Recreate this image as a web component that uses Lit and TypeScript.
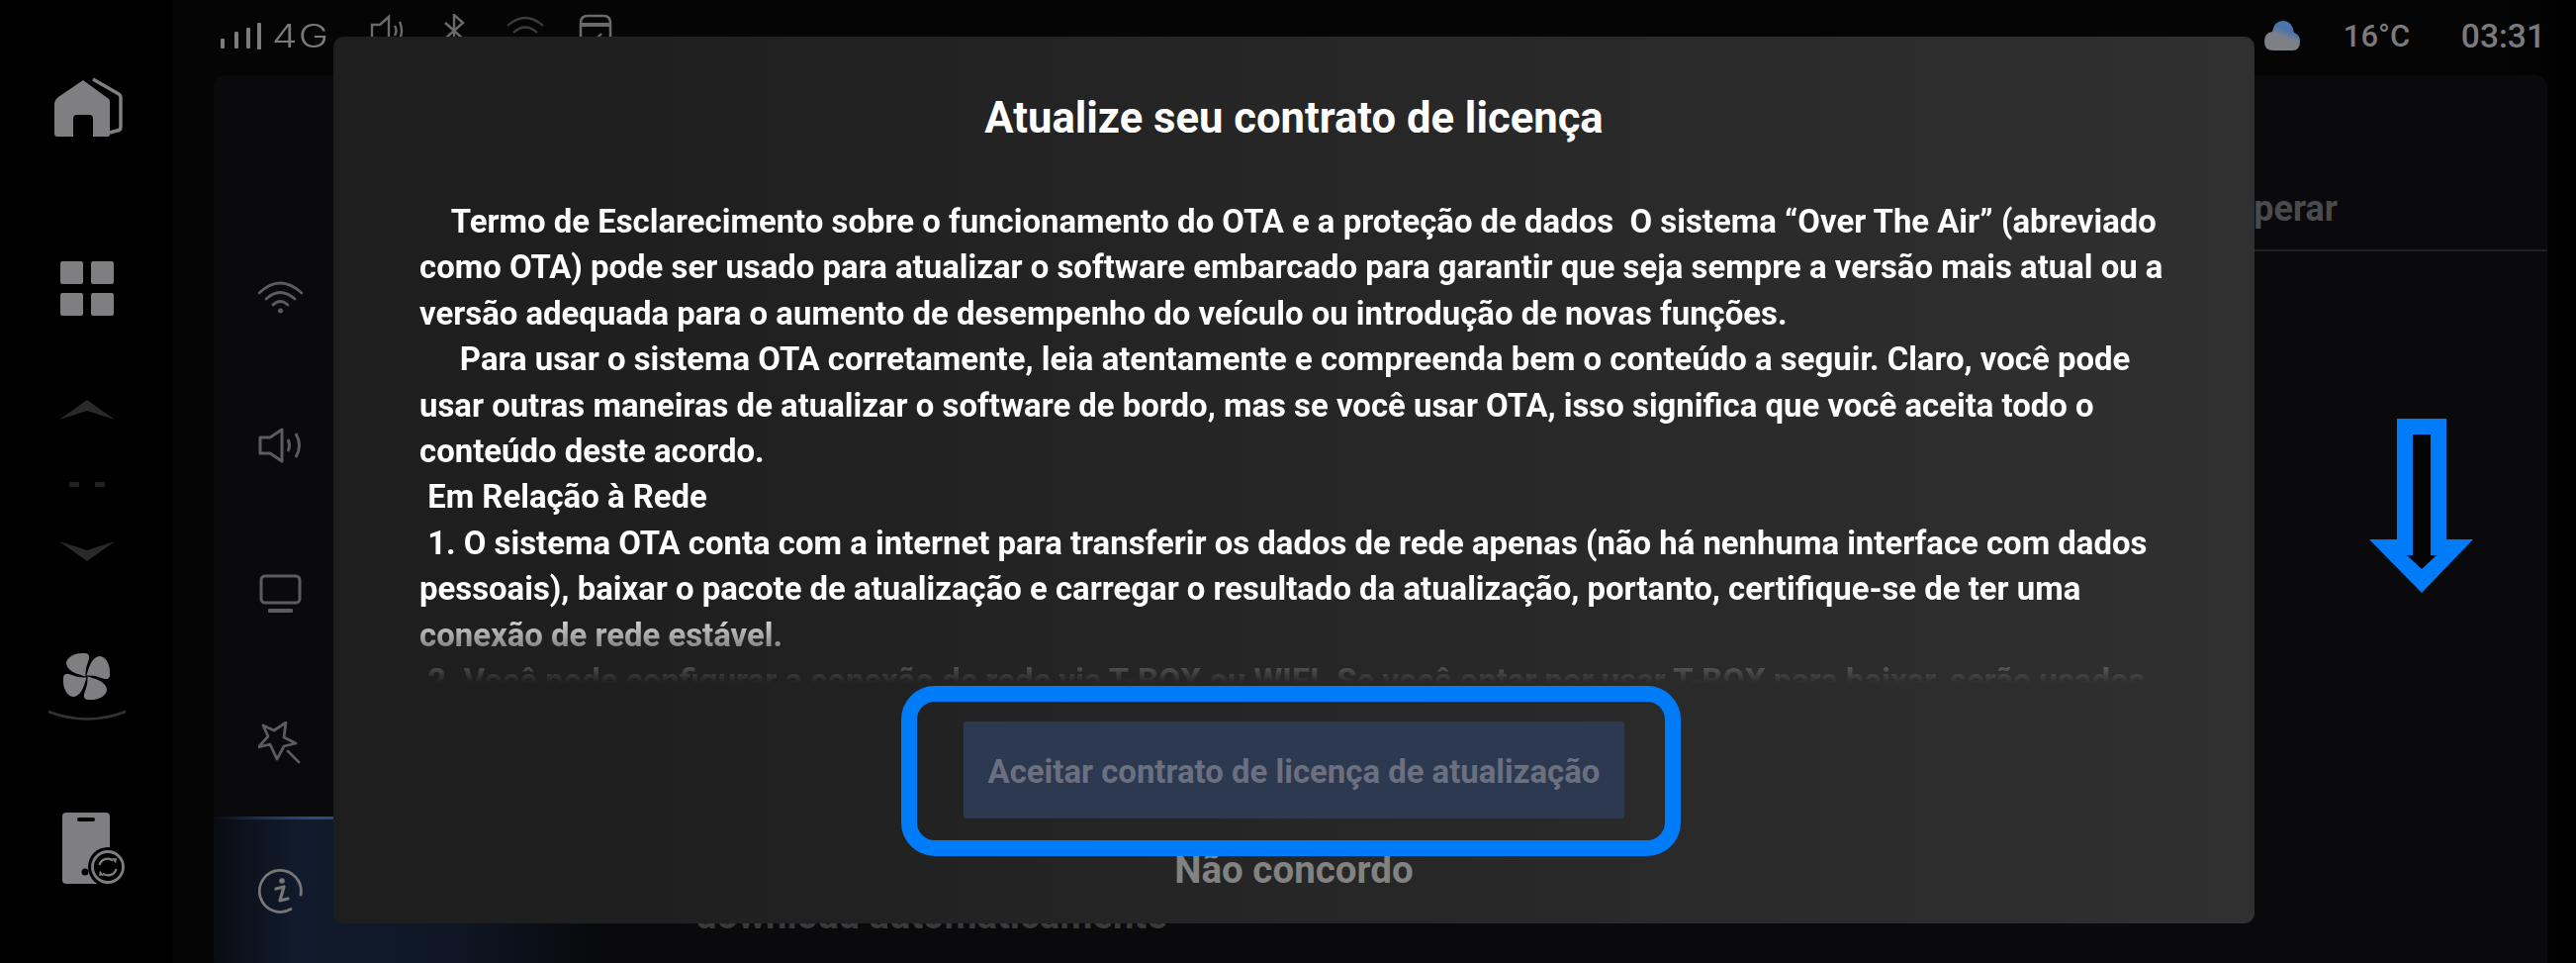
import { LitElement, html, css, svg } from "lit";
import { customElement } from "lit/decorators.js";

const LINES = [
  "    Termo de Esclarecimento sobre o funcionamento do OTA e a proteção de dados  O sistema “Over The Air” (abreviado",
  "como OTA) pode ser usado para atualizar o software embarcado para garantir que seja sempre a versão mais atual ou a",
  "versão adequada para o aumento de desempenho do veículo ou introdução de novas funções.",
  "     Para usar o sistema OTA corretamente, leia atentamente e compreenda bem o conteúdo a seguir. Claro, você pode",
  "usar outras maneiras de atualizar o software de bordo, mas se você usar OTA, isso significa que você aceita todo o",
  "conteúdo deste acordo.",
  " Em Relação à Rede",
  " 1. O sistema OTA conta com a internet para transferir os dados de rede apenas (não há nenhuma interface com dados",
  "pessoais), baixar o pacote de atualização e carregar o resultado da atualização, portanto, certifique-se de ter uma",
  "conexão de rede estável.",
  " 2. Você pode configurar a conexão de rede via T-BOX ou WIFI. Se você optar por usar T-BOX para baixar, serão usados",
];

const G = "#7f7f81";

const home = svg`<svg class="i-home" viewBox="0 0 70 62"><path fill="${G}" d="M29 3 L55 22 Q56 23 56 26 L56 58 Q56 60 54 60 L39 60 L39 42 Q39 38 35 38 L23 38 Q19 38 19 42 L19 60 L3 60 Q0 60 0 57 L0 28 Q0 23 4 20 Z"/><path fill="none" stroke="${G}" stroke-width="3.5" stroke-linejoin="round" d="M39 2 L65 17 Q67 18 67 21 L67 50 Q67 54 63 54 L56 56"/></svg>`;
const grid = svg`<svg class="i-grid" viewBox="0 0 54 55"><g fill="${G}"><rect width="23" height="23" rx="2"/><rect x="31" width="23" height="23" rx="2"/><rect y="32" width="23" height="23" rx="2"/><rect x="31" y="32" width="23" height="23" rx="2"/></g></svg>`;
const up = svg`<svg class="i-chev" viewBox="0 0 56 21"><path fill="#29292a" d="M28 0 L56 20 L28 11 L0 20 Z"/></svg>`;
const down = svg`<svg class="i-chev" viewBox="0 0 56 21"><path fill="#29292a" d="M28 21 L56 1 L28 10 L0 1 Z"/></svg>`;
const dash = svg`<svg class="i-dash" viewBox="0 0 36 5"><rect width="10" height="5" fill="#202021"/><rect x="26" width="10" height="5" fill="#202021"/></svg>`;
const blade = "M23 24 C17 22 6 20 4 12 C3 5 13 0 22 1 C28 1 27 6 25 11 C23 16 23 20 23 24 Z";
const fan = svg`<svg class="i-fan" viewBox="0 0 48 48"><g fill="${G}"><path d="${blade}"/><path d="${blade}" transform="rotate(90 24 24)"/><path d="${blade}" transform="rotate(180 24 24)"/><path d="${blade}" transform="rotate(270 24 24)"/></g></svg>`;
const arc = svg`<svg class="i-arc" viewBox="0 0 80 12"><path fill="none" stroke="#333334" stroke-width="2.5" d="M1 2 Q40 17 79 2"/></svg>`;
const phone = svg`<svg class="i-phone" viewBox="0 0 64 72"><rect x="0" y="0" width="48" height="72" rx="4" fill="${G}"/><rect x="15" y="5" width="18" height="4" rx="2" fill="#000"/><circle cx="46" cy="55" r="20" fill="#000"/><circle cx="23" cy="60" r="3.5" fill="#000"/><circle cx="46" cy="55" r="15.5" fill="none" stroke="${G}" stroke-width="2.8"/><path fill="none" stroke="${G}" stroke-width="2.2" d="M37.5 53 A8.5 8.5 0 0 1 51 48.5 M54.5 57 A8.5 8.5 0 0 1 41 61.5"/><path fill="${G}" d="M50 46 L55 46.5 L54 51.5 Z M42 64 L37 63.5 L38 58.5 Z"/></svg>`;

const sig = svg`<svg class="i-sig" viewBox="0 0 42 27"><g fill="#7c7c7e"><rect x="0" y="16" width="4" height="10" rx="1"/><rect x="14" y="9" width="4" height="17" rx="1"/><rect x="26" y="5" width="4" height="21" rx="1"/><rect x="37" y="0" width="4" height="27" rx="1"/></g></svg>`;
const spk = svg`<svg class="i-spk" viewBox="0 0 34 34"><path fill="none" stroke="#6a6a6c" stroke-width="2.4" d="M2 11 H10 L19 3 V31 L10 25 H2 Z M25 12 Q28 17 25 22 M30 8 Q34 17 30 26"/></svg>`;
const bt = svg`<svg class="i-bt" viewBox="0 0 22 34"><path fill="none" stroke="#6a6a6c" stroke-width="2.4" d="M2 9 L20 25 L11 33 V1 L20 9 L2 25"/></svg>`;
const wifiTop = svg`<svg class="i-wt" viewBox="0 0 38 34"><path fill="none" stroke="#3c3c3d" stroke-width="2.2" d="M1 12 Q19 -4 37 12 M7 19 Q19 8 31 19"/></svg>`;
const cal = svg`<svg class="i-cal" viewBox="0 0 34 34"><path fill="none" stroke="#6a6a6c" stroke-width="2.6" d="M2 30 V9 Q2 2 9 2 H25 Q32 2 32 9 V30"/><path fill="#6a6a6c" d="M2 9 H32 V13 H2 Z"/><path fill="none" stroke="#6a6a6c" stroke-width="2.4" d="M11 24 L15 28 L23 20"/></svg>`;

const cloud = svg`<svg class="i-cloud" viewBox="0 0 36 30"><defs><linearGradient id="cg" x1="0.3" y1="1" x2="0.75" y2="0"><stop offset="0.45" stop-color="#7d8186"/><stop offset="0.7" stop-color="#4a74ac"/></linearGradient></defs><path fill="url(#cg)" d="M9 30 Q0 30 0 21 Q0 12 8 11 Q10 0 19 0 Q28 0 30 12 Q36 14 36 21 Q36 30 28 30 Z"/></svg>`;

const S = "#5c5c5e";
const wifi = svg`<svg class="n" viewBox="0 0 45 34"><g fill="none" stroke="${S}" stroke-width="2.8" stroke-linecap="round"><path d="M1 13 Q22 -7 44 13"/><path d="M8 19 Q22 6 37 19"/><path d="M15 25 Q22 18 30 25"/></g><circle cx="22.5" cy="31" r="2.5" fill="${S}"/></svg>`;
const vol = svg`<svg class="n" viewBox="0 0 45 36"><path fill="none" stroke="${S}" stroke-width="3" stroke-linejoin="round" d="M2 10 H12 L24 2 V34 L12 26 H2 Z"/><path fill="none" stroke="${S}" stroke-width="3" d="M30 12 Q33 18 30 24 M38 6 Q45 18 38 30"/></svg>`;
const mon = svg`<svg class="n" viewBox="0 0 45 40"><rect x="3" y="2" width="39" height="27" rx="4" fill="none" stroke="${S}" stroke-width="3"/><rect x="10" y="35" width="25" height="4" rx="1" fill="${S}"/></svg>`;
const wand = svg`<svg class="n" viewBox="0 0 45 43"><path fill="none" stroke="${S}" stroke-width="2.8" stroke-linejoin="round" d="M5 4 L16 9 L28 1 L26 16 L38 22 L26 25 L19 38 L12 23 L0 26 L10 15 Z"/><path stroke="${S}" stroke-width="2.6" stroke-linecap="round" d="M30 30 L41 41"/></svg>`;
const info = svg`<svg class="n" viewBox="0 0 45 46"><path fill="none" stroke="#767678" stroke-width="2.8" stroke-linecap="round" d="M43 27 A21 21 0 1 0 33 41.5"/><circle cx="24" cy="13" r="2.8" fill="#767678"/><path fill="none" stroke="#767678" stroke-width="3.2" stroke-linecap="round" stroke-linejoin="round" d="M18 21 L26 19 L22 33 L30 31"/></svg>`;

const NAV = [wifi, vol, mon, wand, info];

@customElement("app-root")
export class AppRoot extends LitElement {
  static styles = css`
    :host {
      display: block;
      position: relative;
      width: 2604px;
      height: 973px;
      overflow: hidden;
      background: #000;
      font-family: Roboto, "Liberation Sans", sans-serif;
    }
    svg { display: block; }
    .screen { display: flex; height: 973px; }
    .side {
      width: 175px;
      flex: none;
      display: flex;
      flex-direction: column;
      align-items: center;
      background: #000;
      padding-top: 78px;
      box-sizing: border-box;
    }
    .i-home { width: 70px; height: 62px; margin-left: 5px; }
    .i-grid { width: 54px; height: 55px; margin-top: 124px; }
    .i-chev { width: 56px; height: 21px; }
    .side .i-chev.a { margin-top: 85px; }
    .i-dash { width: 36px; height: 5px; margin-top: 62px; }
    .side .i-chev.b { margin-top: 54px; }
    .i-fan { width: 49px; height: 49px; margin-top: 92px; }
    .i-arc { width: 80px; height: 12px; margin-top: 9px; }
    .i-phone { width: 64px; height: 72px; margin-top: 92px; margin-left: 14px; }
    .main {
      flex: 1;
      display: flex;
      flex-direction: column;
      background: linear-gradient(90deg, #050505 0, #050505 97%, #000 100%);
      min-width: 0;
    }
    .status {
      height: 76px;
      flex: none;
      display: flex;
      align-items: center;
      padding: 0 31px 4px 48px;
      box-sizing: border-box;
      color: #7b7b7d;
    }
    .i-sig { width: 42px; height: 27px; }
    .g4 {
      font-family: Inter, Roboto, sans-serif;
      font-size: 32px;
      font-weight: 300;
      letter-spacing: 1px;
      color: #7a7a7c;
      margin-left: 10px;
      width: 57px;
      display: block;
      transform: scaleX(1.27);
      transform-origin: left center;
    }
    .i-spk { width: 34px; height: 34px; margin-left: 42px; margin-top: -10px; }
    .i-bt { width: 22px; height: 34px; margin-left: 40px; margin-top: -10px; }
    .i-wt { width: 38px; height: 34px; margin-left: 42px; margin-top: -10px; }
    .i-cal { width: 34px; height: 34px; margin-left: 35px; margin-top: -10px; }
    .spacer { flex: 1; }
    .i-cloud { width: 36px; height: 30px; margin-right: 44px; }
    .temp { font-size: 31px; font-weight: 500; width: 119px; }
    .time { font-size: 33.6px; font-weight: 500; }
    .panel {
      flex: 1;
      display: flex;
      margin: 0 29px 0 41px;
      background: #0a0a0c;
      border-radius: 12px 12px 0 0;
      min-height: 0;
    }
    .nav { width: 392px; flex: none; padding-top: 149px; box-sizing: border-box; }
    .nav-item {
      height: 150px;
      display: flex;
      align-items: center;
      padding-left: 45px;
      box-sizing: border-box;
    }
    .nav-item.on {
      position: relative;
      background: linear-gradient(90deg, #0a0c12 0, #111b2d 22%, #0f1726 60%, #08090c 100%);
    }
    .nav-item.on::before {
      content: "";
      position: absolute;
      left: 0;
      right: 0;
      top: 0;
      height: 3px;
      background: linear-gradient(90deg, transparent 0, #2a4a80 25%, #2a4a80 100%);
    }
    .n { width: 45px; height: auto; }
    .content { flex: 1; display: flex; flex-direction: column; min-width: 0; }
    .tabs {
      height: 178px;
      flex: none;
      box-sizing: border-box;
      border-bottom: 2px solid #1f1f20;
      display: flex;
      justify-content: flex-end;
      align-items: flex-end;
      padding: 0 212px 20px 0;
      color: #4a4a4c;
      font-size: 36px;
      font-weight: 700;
    }
    .detail {
      padding: 649px 0 0 95px;
      font-size: 38.2px;
      font-weight: 700;
      color: #3a3a3b;
      white-space: nowrap;
    }
    .modal {
      position: absolute;
      left: 337px;
      top: 37px;
      width: 1942px;
      height: 896px;
      box-sizing: border-box;
      border-radius: 10px;
      background: linear-gradient(90deg, #1e1e1e 0, #1f1f1f 15%, #303030 100%);
      padding: 59px 87px 0;
      display: flex;
      flex-direction: column;
      align-items: center;
      color: #fff;
    }
    .title { font-size: 43.6px; line-height: 48px; font-weight: 700; margin: 0; }
    .body {
      align-self: stretch;
      margin-top: 57px;
      height: 489px;
      overflow: hidden;
      -webkit-mask-image: linear-gradient(180deg, #000 84%, transparent 100%);
      mask-image: linear-gradient(180deg, #000 84%, transparent 100%);
    }
    .line {
      white-space: pre;
      font-size: 32.9px;
      line-height: 46.4px;
      font-weight: 700;
    }
    .accept {
      margin-top: 39px;
      flex: none;
      width: 668px;
      height: 98px;
      display: flex;
      align-items: center;
      justify-content: center;
      background: #2d3950;
      color: #6b7080;
      border-radius: 3px;
      font-size: 32.9px;
      font-weight: 700;
      padding-top: 2px;
      box-sizing: border-box;
    }
    .reject {
      margin-top: 29px;
      font-size: 38.5px;
      line-height: 46px;
      font-weight: 700;
      color: #828283;
    }
    .frame {
      position: absolute;
      left: 911px;
      top: 693px;
      width: 788px;
      height: 172px;
      box-sizing: border-box;
      border: 16px solid #007cf8;
      border-radius: 34px;
    }
    .arrow {
      position: absolute;
      left: 2395px;
      top: 423px;
      width: 105px;
      height: 176px;
    }
  `;

  render() {
    return html`
      <div class="screen">
        <aside class="side">
          ${home}${grid}
          <div class="a i-chev">${up}</div>
          ${dash}
          <div class="b i-chev">${down}</div>
          ${fan}${arc}${phone}
        </aside>
        <div class="main">
          <header class="status">
            ${sig}<span class="g4">4G</span>${spk}${bt}${wifiTop}${cal}
            <span class="spacer"></span>
            ${cloud}<span class="temp">16°C</span><span class="time">03:31</span>
          </header>
          <section class="panel">
            <nav class="nav">
              ${NAV.map(
                (icon, i) => html`<div class="nav-item ${i === 4 ? "on" : ""}">${icon}</div>`
              )}
            </nav>
            <div class="content">
              <div class="tabs">Recuperar</div>
              <div class="detail">download automaticamente</div>
            </div>
          </section>
        </div>
      </div>
      <div class="modal">
        <h1 class="title">Atualize seu contrato de licença</h1>
        <div class="body">
          ${LINES.map((l) => html`<div class="line">${l}</div>`)}
        </div>
        <div class="accept">Aceitar contrato de licença de atualização</div>
        <div class="reject">Não concordo</div>
      </div>
      <div class="frame"></div>
      <svg class="arrow" viewBox="0 0 105 176">
        <path fill="#007cf8" d="M28 0 H78 V122 H105 L53 176 L0 122 H28 Z" />
        <path fill="#040404" d="M44 16 H62 V138 H68 L53 152 L38 138 H44 Z" />
      </svg>
    `;
  }
}
